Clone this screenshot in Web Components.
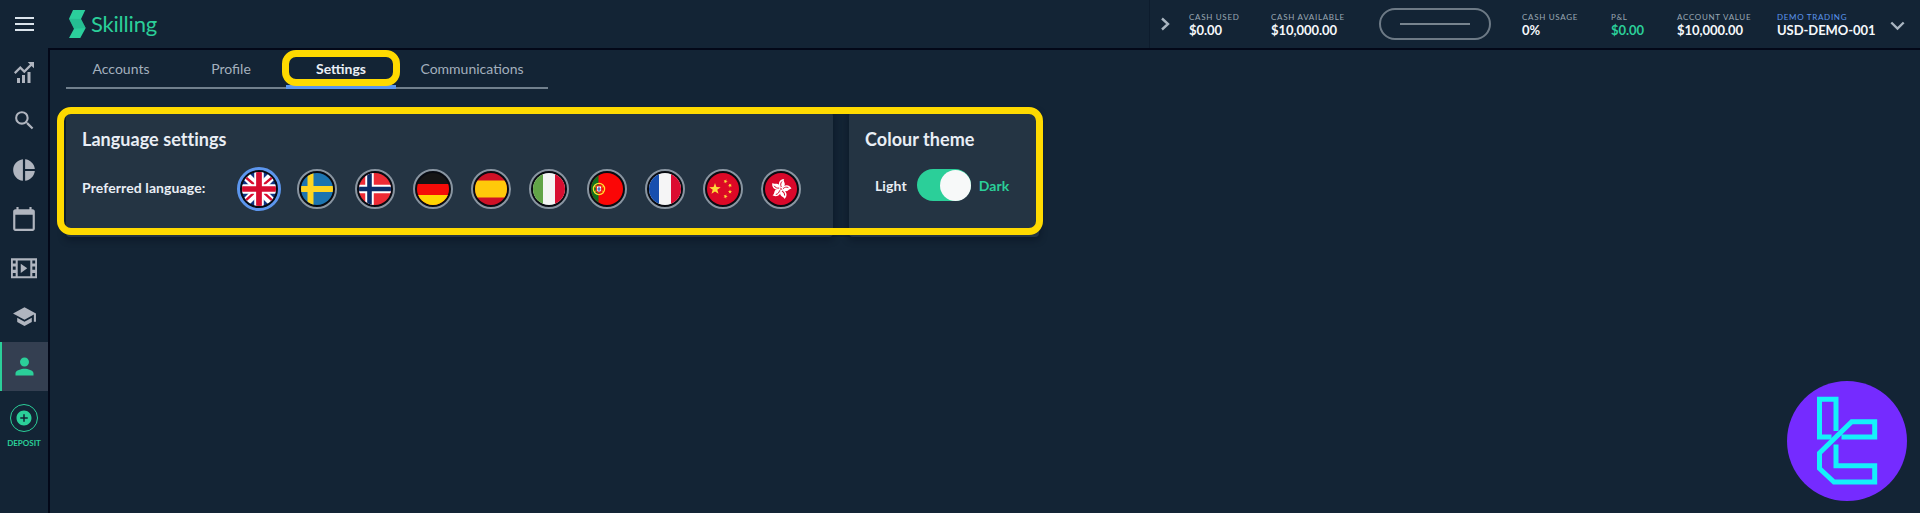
<!DOCTYPE html>
<html lang="en">
<head>
<meta charset="utf-8">
<title>Skilling</title>
<style>
  html, body {
    margin: 0;
    height: 100%;
    overflow: hidden;
  }
  body {
    --bg: #132435;
    --card: #243443;
    --line: #030818;
    --green: #2bcf99;
    --blue: #5c96ee;
    --yellow: #ffda00;
    --icon: #b0b5bf;
    background: var(--bg);
    color: #e9eef5;
    font-family: Lato, "Liberation Sans", sans-serif;
  }
</style>
</head>
<body>

<template id="app-shell">
  <style>
    :host { display: flex; flex-direction: column; height: 100vh; position: relative; }
    .main { flex: 1; display: flex; min-height: 0; }
    .content {
      flex: 1;
      box-sizing: border-box;
      border-left: 2px solid var(--line);
      border-top: 2px solid var(--line);
      padding: 0 16px;
    }
    .float { position: absolute; right: 13px; bottom: 12px; }
  </style>
  <slot name="header"></slot>
  <div class="main">
    <slot name="nav"></slot>
    <div class="content"><slot></slot></div>
  </div>
  <div class="float"><slot name="float"></slot></div>
</template>

<template id="app-header">
  <style>
    :host { display: flex; height: 48px; align-items: stretch; }
    .menu { width: 48px; display: flex; flex-direction: column; align-items: center; justify-content: center; gap: 4px; }
    .menu i { width: 19px; height: 2px; background: #dbe4ec; }
    .brand { display: flex; align-items: center; padding-left: 21px; }
    .brand svg { margin-right: 5px; }
    .brand span { font-size: 22px; letter-spacing: -.2px; color: var(--green); line-height: 28px; }
    .right { margin-left: auto; display: flex; border-left: 1px solid #0d1c2d; }
    .arrow { width: 39px; display: flex; align-items: center; }
    .arrow svg { margin-left: 10px; }
    .pill {
      box-sizing: border-box;
      width: 112px;
      height: 32px;
      margin: 8px 31px 0 0;
      border: 2px solid #6d7a86;
      border-radius: 16px;
      display: flex;
      align-items: center;
      justify-content: center;
    }
    .pill i { width: 70px; height: 2px; background: #77848f; }
    .down { display: flex; align-items: center; padding: 4px 15px 0 0; }
  </style>
  <div class="menu"><i></i><i></i><i></i></div>
  <div class="brand">
    <svg width="17" height="28" viewBox="0 0 17 28">
      <path fill="#2bcf9c" d="M4 0h12.3L12 9l4.700 9L11.300 28H0l5-9.200L0 8.700z"/>
      <path fill="#20a987" d="M0 8.700L12 9l-7 9.800zM5 18.800L12 9l4.700 9z" opacity=".45"/>
    </svg>
    <span>Skilling</span>
  </div>
  <div class="right">
    <div class="arrow">
      <svg width="11" height="14" viewBox="0 0 11 14"><path d="M2 1.500L8 7l-6 5.500" fill="none" stroke="#a9b5c0" stroke-width="2.400"/></svg>
    </div>
    <stat-item label="CASH USED" value="$0.00" style="width:82px"></stat-item>
    <stat-item label="CASH AVAILABLE" value="$10,000.00" style="width:108px"></stat-item>
    <div class="pill"><i></i></div>
    <stat-item label="CASH USAGE" value="0%" style="width:89px"></stat-item>
    <stat-item label="P&amp;L" value="$0.00" style="width:66px;--value:#2bcf99"></stat-item>
    <stat-item label="ACCOUNT VALUE" value="$10,000.00" style="width:100px"></stat-item>
    <stat-item label="DEMO TRADING" value="USD-DEMO-001" style="width:113px;--label:#5c96ee"></stat-item>
    <div class="down">
      <svg width="15" height="10" viewBox="0 0 15 10"><path d="M1.300 1.500l6.200 6 6.200-6" fill="none" stroke="#a9b5c0" stroke-width="2.400"/></svg>
    </div>
  </div>
</template>

<template id="stat-item">
  <style>
    :host { display: block; box-sizing: border-box; padding-top: 12px; white-space: nowrap; }
    .label { font-size: 8px; line-height: 10px; letter-spacing: .7px; color: var(--label, #9aa7b3); }
    .value { font-size: 13px; line-height: 17px; font-weight: 700; letter-spacing: -.05px; color: var(--value, #f5f8fb); }
  </style>
  <div class="label"></div>
  <div class="value"></div>
</template>

<template id="side-nav">
  <style>
    :host { display: flex; flex-direction: column; width: 48px; }
    .deposit { display: flex; flex-direction: column; align-items: center; padding-top: 13px; color: var(--green); }
    .ring { box-sizing: border-box; width: 28px; height: 28px; border: 1px solid; border-radius: 50%; display: flex; align-items: center; justify-content: center; }
    .deposit span { font-size: 8px; font-weight: 700; line-height: 10px; margin-top: 6px; }
  </style>
  <slot></slot>
  <div class="deposit">
    <div class="ring">
      <svg width="18" height="18" viewBox="0 0 24 24" fill="currentColor"><path d="M12 2C6.480 2 2 6.480 2 12s4.480 10 10 10 10-4.480 10-10S17.520 2 12 2zm5 11h-4v4h-2v-4H7v-2h4V7h2v4h4v2z"/></svg>
    </div>
    <span>DEPOSIT</span>
  </div>
</template>

<template id="nav-item">
  <style>
    :host { display: flex; box-sizing: border-box; height: 49px; align-items: center; justify-content: center; padding-bottom: 2px; color: var(--icon); }
    :host([active]) { color: var(--green); background: #343f51; box-shadow: inset 2px 0 var(--green); padding-bottom: 0; }
    svg { display: block; fill: currentColor; }
  </style>
  <div class="icon"></div>
</template>

<template id="tab-bar">
  <style>
    :host { display: flex; width: 482px; height: 39px; box-sizing: border-box; border-bottom: 2px solid #71808d; }
  </style>
  <slot></slot>
</template>

<template id="tab-item">
  <style>
    :host { display: flex; position: relative; width: 110px; height: 37px; justify-content: center; font-size: 14px; line-height: 38px; color: #a3b0bd; }
    :host([wide]) { width: 152px; }
    :host([active]) { color: #e9eef5; font-weight: 700; }
    :host([active])::before { content: ""; position: absolute; left: 0; right: 0; bottom: -2px; height: 4px; background: var(--blue); }
    :host([active])::after { content: ""; position: absolute; inset: 0 -4px 1px; border: 7px solid var(--yellow); border-radius: 14px; }
  </style>
  <slot></slot>
</template>

<template id="card-row">
  <style>
    :host { display: flex; position: relative; gap: 16px; margin-top: 23px; width: 973px; }
    :host::after { content: ""; position: absolute; left: -9px; top: -5px; width: 986px; height: 128px; box-sizing: border-box; border: 7px solid var(--yellow); border-radius: 14px; }
  </style>
  <slot></slot>
</template>

<template id="settings-card">
  <style>
    :host {
      display: block;
      box-sizing: border-box;
      height: 125px;
      padding: 14px 16px 0;
      background: var(--card);
      border-radius: 4px;
      box-shadow: 0 2px 7px 1px rgba(3, 10, 22, .4);
    }
    h2 { margin: 0; font-size: 18px; line-height: 26px; font-weight: 700; letter-spacing: .05px; }
  </style>
  <h2></h2>
  <slot></slot>
</template>

<template id="language-picker">
  <style>
    :host { display: flex; align-items: center; margin-top: 14px; height: 46px; }
    .label { width: 155px; font-size: 14px; font-weight: 700; letter-spacing: .1px; margin-top: -3px; }
    .flags { display: flex; align-items: center; gap: 18px; }
  </style>
  <span class="label">Preferred language:</span>
  <div class="flags"><slot></slot></div>
</template>

<template id="flag-icon">
  <style>
    :host { display: block; box-sizing: border-box; width: 40px; height: 40px; border: 2px solid #8995a1; border-radius: 50%; background: #080b12; padding: 2px; }
    :host([selected]) { width: 44px; height: 44px; border: 3px solid var(--blue); margin-right: -2px; }
    svg { display: block; width: 100%; height: 100%; border-radius: 50%; }
  </style>
</template>

<template id="theme-switch">
  <style>
    :host { display: flex; align-items: center; margin: 17px 0 0 10px; height: 32px; font-size: 14px; font-weight: 700; letter-spacing: .1px; }
    .track { box-sizing: border-box; width: 54px; height: 32px; margin: 0 8px 0 10px; border-radius: 16px; background: var(--green); display: flex; justify-content: flex-end; }
    .knob { width: 31px; height: 31px; border-radius: 50%; background: #f7f9f9; margin-top: .5px; }
    .on { color: var(--green); }
  </style>
  <span>Light</span>
  <div class="track"><div class="knob"></div></div>
  <span class="on">Dark</span>
</template>

<template id="brand-badge">
  <style>
    :host { display: block; }
    svg { display: block; }
  </style>
  <svg width="120" height="120" viewBox="0 0 120 120">
    <circle cx="60" cy="60" r="60" fill="#752bff"/>
    <g fill="none" stroke="#14f1fa" stroke-width="5">
      <path d="M44.500 56H32.500V18.300H49V50"/>
      <path d="M54.500 56H87.700V40.700H64.700L32.500 72v15.500l14.500 13.600h40.700V84.700H49V63.500"/>
    </g>
  </svg>
</template>

<app-shell>
  <app-header slot="header"></app-header>
  <side-nav slot="nav">
    <nav-item icon="chart"></nav-item>
    <nav-item icon="search"></nav-item>
    <nav-item icon="pie"></nav-item>
    <nav-item icon="calendar"></nav-item>
    <nav-item icon="film"></nav-item>
    <nav-item icon="school"></nav-item>
    <nav-item icon="person" active></nav-item>
  </side-nav>
  <tab-bar>
    <tab-item>Accounts</tab-item>
    <tab-item>Profile</tab-item>
    <tab-item active>Settings</tab-item>
    <tab-item wide>Communications</tab-item>
  </tab-bar>
  <card-row>
    <settings-card heading="Language settings" style="width:767px">
      <language-picker>
        <flag-icon code="gb" selected></flag-icon>
        <flag-icon code="se"></flag-icon>
        <flag-icon code="no"></flag-icon>
        <flag-icon code="de"></flag-icon>
        <flag-icon code="es"></flag-icon>
        <flag-icon code="it"></flag-icon>
        <flag-icon code="pt"></flag-icon>
        <flag-icon code="fr"></flag-icon>
        <flag-icon code="cn"></flag-icon>
        <flag-icon code="hk"></flag-icon>
      </language-picker>
    </settings-card>
    <settings-card heading="Colour theme" style="width:190px">
      <theme-switch></theme-switch>
    </settings-card>
  </card-row>
  <brand-badge slot="float"></brand-badge>
</app-shell>

<script>
  (function() {
    let $ = (selector, node = document) => node.querySelector(selector);

    // [size, svg content], all on a 24 unit grid
    const icons = {
      chart: [24, '<path d="M2 12.200L8.300 6l4 4L18 4.200 15.700 2H22v6.300l-2.500-2.400-7.200 7.300-4-4-4.800 4.700zM5 18h3v5H5zM10 15h3v8h-3zM15.500 12h3v11h-3z"/>'],
      search: [25, '<path d="M15.500 14h-.79l-.28-.27A6.471 6.471 0 0 0 16 9.500 6.500 6.500 0 1 0 9.500 16c1.610 0 3.090-.59 4.230-1.570l.27.28v.79l5 4.990L20.490 19l-4.990-5zm-6 0C7.010 14 5 11.990 5 9.500S7.010 5 9.500 5 14 7.010 14 9.500 11.990 14 9.500 14z"/>'],
      pie: [26, '<path d="M11 2v20c-5.070-.5-9-4.790-9-10s3.930-9.500 9-10zm2.030 0v8.990H22c-.47-4.740-4.240-8.520-8.970-8.990zm0 11.010V22c4.740-.47 8.500-4.250 8.970-8.990h-8.970z"/>'],
      calendar: [26, '<path d="M20 3h-1V1h-2v2H7V1H5v2H4c-1.100 0-2 .9-2 2v16c0 1.100.9 2 2 2h16c1.100 0 2-.9 2-2V5c0-1.100-.9-2-2-2zm0 18H4V8h16v13z"/>'],
      film: [26, '<path fill-rule="evenodd" d="M0 3h24v18.500H0zM1.700 5v2.800h2.600V5zm0 5.700v2.900h2.600v-2.900zm0 5.800v3h2.600v-3zM19.700 5v2.800h2.600V5zm0 5.700v2.900h2.600v-2.900zm0 5.800v3h2.600v-3zM6.200 5v14.500h11.600V5zM9 8l6 4.300L9 16.500z"/>'],
      school: [25, '<path d="M5 13.180v4L12 21l7-3.820v-4L12 17l-7-3.820zM12 3L1 9l11 6 9-4.910V17h2V9L12 3z"/>'],
      person: [27, '<path d="M12 12c2.210 0 4-1.790 4-4s-1.790-4-4-4-4 1.790-4 4 1.790 4 4 4zm0 2c-2.670 0-8 1.340-8 4v2h16v-2c0-2.660-5.330-4-8-4z"/>']
    };

    let star = (cx, cy, r, turn = 0) => {
      let points = [];
      for (let i = 0; i < 10; i++) {
        let a = (i * 36 - 90 + turn) * Math.PI / 180;
        let d = i % 2 ? r * .4 : r;
        points.push((cx + d * Math.cos(a)).toFixed(2) + ',' + (cy + d * Math.sin(a)).toFixed(2));
      }
      return `<polygon fill="#ffd83a" points="${points.join(' ')}"/>`;
    };
    let petals = [0, 72, 144, 216, 288].map(a => `
      <g transform="rotate(${a + 15} 16 16)">
        <path fill="#fff" d="M16 15.500c-5-2.500-4.500-8.500.5-10-1.200 2 2.800 3.500 2 6.500-.4 1.700-1.500 2.500-2.500 3.500z"/>
        <path d="M15.800 14c-1.500-1.800-1.800-3.500-.8-5.500" fill="none" stroke="#d9082b" stroke-width=".9"/>
      </g>`).join('');

    // flags on a 32x32 square, clipped to a circle by the host
    const flags = {
      gb: `<rect width="32" height="32" fill="#0e3283"/>
        <path d="M0 0l32 32M32 0L0 32" stroke="#fff" stroke-width="8"/>
        <path d="M0 2l14 12M32 2L19 13M0 30l12-11M32 30L19 18" stroke="#d80d2f" stroke-width="2.300"/>
        <path d="M16 0v32M0 16h32" stroke="#fff" stroke-width="9"/>
        <path d="M16 0v32M0 16h32" stroke="#d80d2f" stroke-width="5.400"/>`,
      se: `<rect width="32" height="32" fill="#1c74b0"/><path d="M9.500 0v32M0 16h32" stroke="#ffd521" stroke-width="6"/>`,
      no: `<rect width="32" height="32" fill="#ee2b35"/><path d="M10.500 0v32M0 16h32" stroke="#fff" stroke-width="8.500"/><path d="M10.500 0v32M0 16h32" stroke="#0b2c66" stroke-width="4.600"/>`,
      de: `<rect width="32" height="32" fill="#151515"/><path d="M0 11h32v21H0z" fill="#f50c08"/><path d="M0 22h32v10H0z" fill="#ffd500"/>`,
      es: `<rect width="32" height="32" fill="#cf1126"/><path d="M0 7.500h32v17H0z" fill="#ffc90a"/>`,
      it: `<rect width="32" height="32" fill="#f4f5f4"/><path d="M0 0h10v32H0z" fill="#62a447"/><path d="M22 0h10v32H22z" fill="#d80f31"/>`,
      pt: `<rect width="32" height="32" fill="#fb0606"/><path d="M0 0h7.500v32H0z" fill="#11701d"/>
        <circle cx="8" cy="16" r="5.600" fill="none" stroke="#ffdf2e" stroke-width="1.300"/>
        <path d="M3 13l10 6M3 19l10-6" stroke="#ffdf2e" stroke-width=".8"/>
        <path d="M4.800 12.500h6.400v4.500c0 4-6.400 4-6.400 0z" fill="#ef2a22"/>
        <path d="M6 13.500h4v3.300c0 2.600-4 2.600-4 0z" fill="#fff"/>
        <path d="M8 14v4.500M6.300 16h3.400" stroke="#1c4aa8" stroke-width="1"/>`,
      fr: `<rect width="32" height="32" fill="#f5f5f6"/><path d="M0 0h10v32H0z" fill="#174fae"/><path d="M22 0h10v32H22z" fill="#dc0b31"/>`,
      cn: `<rect width="32" height="32" fill="#dc0826"/>` + star(8, 16, 6) + star(18.500, 8.300, 2.300, 20) + star(23, 12.500, 2.200, 40) + star(23, 18.800, 2.200) + star(18.500, 23.500, 2.300, 20),
      hk: `<rect width="32" height="32" fill="#d9082b"/>` + petals
    };

    // registers a tag whose shadow root is cloned from the template with the same id
    function define(tag, setup) {
      customElements.define(tag, class extends HTMLElement {
        constructor() {
          super();
          let content = $(`template#${tag}`).content.cloneNode(true);
          this.attachShadow({mode: 'open'}).append(content);
        }
        connectedCallback() {
          if (setup) setup(this, this.shadowRoot);
        }
      });
    }

    define('stat-item', (host, root) => {
      $('.label', root).textContent = host.getAttribute('label');
      $('.value', root).textContent = host.getAttribute('value');
    });
    define('nav-item', (host, root) => {
      let [size, shape] = icons[host.getAttribute('icon')];
      $('.icon', root).innerHTML = `<svg width="${size}" height="${size}" viewBox="0 0 24 24">${shape}</svg>`;
    });
    define('flag-icon', (host, root) => {
      root.innerHTML += `<svg viewBox="0 0 32 32">${flags[host.getAttribute('code')]}</svg>`;
    });
    define('settings-card', (host, root) => {
      $('h2', root).textContent = host.getAttribute('heading');
    });
    ['app-header', 'side-nav', 'tab-bar', 'tab-item', 'card-row', 'language-picker', 'theme-switch', 'brand-badge', 'app-shell'].forEach(tag => define(tag));
  })();
</script>
</body>
</html>
